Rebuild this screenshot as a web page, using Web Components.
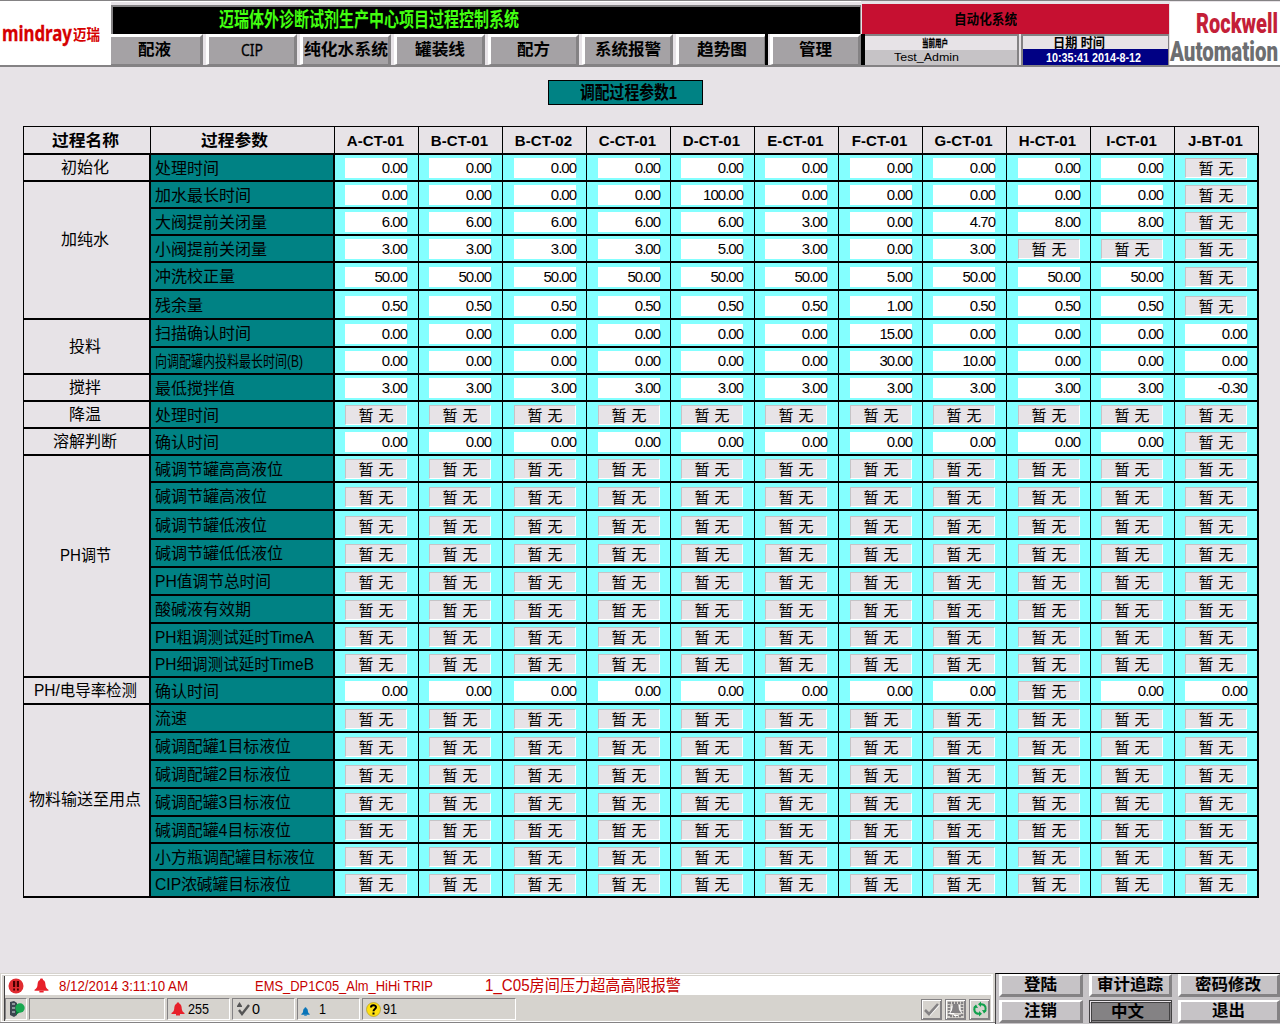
<!DOCTYPE html>
<html lang="zh-CN">
<head>
<meta charset="UTF-8">
<title>调配过程参数1</title>
<style>
    * { box-sizing: border-box; }
    html, body { margin: 0; padding: 0; }
    body {
        width: 1280px;
        height: 1024px;
        overflow: hidden;
        background: #e7e3e7;
        color: #000;
        font-family: "Liberation Sans", "Noto Sans CJK SC", sans-serif;
        font-size: 16px;
    }
    hmi-screen { height: 1024px; }
</style>
</head>
<body>
<hmi-screen>
    <hmi-header slot="header"></hmi-header>
    <page-title slot="title"><fit-text w="97" size="18" bold>调配过程参数1</fit-text></page-title>
    <param-table slot="main"></param-table>
    <alarm-bar slot="footer"></alarm-bar>
    <user-keys slot="footer"></user-keys>
</hmi-screen>

<script>
    // Text squeezed or stretched horizontally to a given width
    class FitText extends HTMLElement {
        connectedCallback() {
            const w = this.getAttribute('w');
            const size = this.getAttribute('size') || 16;
            this.attachShadow({ mode: 'open' });
            this.shadowRoot.innerHTML = `
                <style>
                    :host {
                        display: block;
                        flex: none;
                        width: ${w}px;
                        height: ${size}px;
                        line-height: ${size}px;
                        font-size: ${size}px;
                        white-space: nowrap;
                        ${this.hasAttribute('bold') ? 'font-weight: bold;' : ''}
                    }
                    span { display: inline-block; transform-origin: 0 50%; }
                </style>
                <span><slot></slot></span>
            `;
            const span = this.shadowRoot.querySelector('span');
            const real = span.getBoundingClientRect().width;
            if (real > 0) {
                span.style.transform = `scaleX(${w / real})`;
            }
        }
    }

    class HmiScreen extends HTMLElement {
        connectedCallback() {
            this.attachShadow({ mode: 'open' });
            this.shadowRoot.innerHTML = `
                <style>
                    :host { display: flex; flex-direction: column; width: 1280px; }
                    .title { display: flex; justify-content: center; padding: 13px 29px 21px 0; }
                    .main { padding-left: 23px; flex: 1; }
                    .footer { display: flex; height: 51px; }
                </style>
                <slot name="header"></slot>
                <div class="title"><slot name="title"></slot></div>
                <div class="main"><slot name="main"></slot></div>
                <div class="footer"><slot name="footer"></slot></div>
            `;
        }
    }

    class PageTitle extends HTMLElement {
        connectedCallback() {
            this.attachShadow({ mode: 'open' });
            this.shadowRoot.innerHTML = `
                <style>
                    :host {
                        display: flex;
                        box-sizing: border-box;
                        width: 155px;
                        height: 25px;
                        padding: 3px 0 0 31px;
                        border: 1px solid #000;
                        background: #008284;
                    }
                </style>
                <slot></slot>
            `;
        }
    }

    class NavButton extends HTMLElement {
        connectedCallback() {
            this.attachShadow({ mode: 'open' });
            this.shadowRoot.innerHTML = `
                <style>
                    :host {
                        display: flex;
                        box-sizing: border-box;
                        justify-content: center;
                        width: 91px;
                        height: 31px;
                        padding-top: 5px;
                        border-style: solid;
                        border-width: 3px 3px 1px 3px;
                        border-color: #fff #848284 #848284 #fff;
                        background: #a5a2a5;
                    }
                    :host([first]) { width: 92px; border-left-width: 0; padding-right: 2px; }
                </style>
                <slot></slot>
            `;
        }
    }

    class HmiHeader extends HTMLElement {
        connectedCallback() {
            this.attachShadow({ mode: 'open' });
            const items = [['配液', 33], ['CIP', 22], ['纯化水系统', 84], ['罐装线', 50],
                ['配方', 33], ['系统报警', 66], ['趋势图', 50], ['管理', 33]];
            this.shadowRoot.innerHTML = `
                <style>
                    * { box-sizing: border-box; }
                    :host {
                        display: flex;
                        box-sizing: border-box;
                        height: 67px;
                        border-top: 1px solid #848284;
                        border-bottom: 2px solid #848284;
                    }
                    .mindray { display: flex; width: 111px; padding: 22px 0 0 2px; background: #fff; color: #d60000; }
                    .mindray .cn { padding: 4px 0 0 1px; }
                    .mindray .en { font-family: "Noto Sans", sans-serif; -webkit-text-stroke: .3px #d60000; }
                    .mid { width: 750px; padding-top: 3px; border-top: 1px solid #fff; }
                    .banner {
                        height: 29px;
                        padding: 3px 0 0 106px;
                        border-style: solid;
                        border-width: 2px 1px 0 2px;
                        border-color: #848284;
                        background: #000;
                        color: #42ff10;
                    }
                    nav { display: flex; gap: 3px; }
                    nav .bar { width: 3px; margin: 0 -1px 0 -5px; background: #000; }
                    nav .latin { font-family: "Noto Sans", sans-serif; -webkit-text-stroke: .3px #000; }
                    .right { width: 309px; padding-top: 3px; }
                    .auto { height: 30px; margin: 0 1px 0 1px; padding: 8px 0 0 92px; background: #c61031; }
                    .info { display: flex; height: 31px; border-left: 4px solid #000; }
                    .user { width: 154px; border-top: 2px solid #848284; border-right: 2px solid #848284; }
                    .user .cap { height: 14px; padding: 3px 0 0 57px; -webkit-text-stroke: .3px #000; }
                    .user .val { height: 15px; padding: 2px 0 0 29px; background: #c6c3c6; }
                    .gap { width: 2px; }
                    .date { width: 148px; border-top: 2px solid #848284; border-left: 2px solid #848284; border-right: 1px solid #848284; }
                    .date .cap { height: 13px; padding: 0 0 0 30px; }
                    .date .val { height: 16px; padding: 3px 0 0 23px; background: #000084; color: #fff; }
                    .rockwell { width: 110px; border-top: 1px solid #e7e3e7; padding: 8px 0 0 0; background: #fff; font-family: Roboto, "Open Sans", sans-serif; }
                    .rockwell fit-text { font-weight: 900; }
                    .rockwell .r { padding-left: 26px; color: #c41f38; }
                    .rockwell .a { color: #6d6e71; }
                </style>
                <div class="mindray">
                    <fit-text class="en" w="70" size="21" bold>mindray</fit-text>
                    <div class="cn"><fit-text w="27" size="15" bold>迈瑞</fit-text></div>
                </div>
                <div class="mid">
                    <div class="banner"><fit-text w="300" size="20" bold>迈瑞体外诊断试剂生产中心项目过程控制系统</fit-text></div>
                    <nav>
                        ${items.map(([t, w], i) => `
                            ${i === 7 ? '<div class="bar"></div>' : ''}
                            <nav-button ${i === 0 ? 'first' : ''}><fit-text w="${w}" size="16" ${t === 'CIP' ? 'class="latin"' : 'bold'}>${t}</fit-text></nav-button>
                        `).join('')}
                    </nav>
                </div>
                <div class="right">
                    <div class="auto"><fit-text w="63" size="14" bold>自动化系统</fit-text></div>
                    <div class="info">
                        <div class="user">
                            <div class="cap"><fit-text w="26" size="10" bold>当前用户</fit-text></div>
                            <div class="val"><fit-text w="65" size="11">Test_Admin</fit-text></div>
                        </div>
                        <div class="gap"></div>
                        <div class="date">
                            <div class="cap"><fit-text w="52" size="13" bold>日期 时间</fit-text></div>
                            <div class="val"><fit-text w="95" size="12" bold>10:35:41 2014-8-12</fit-text></div>
                        </div>
                    </div>
                </div>
                <div class="rockwell">
                    <div class="r"><fit-text w="82" size="28">Rockwell</fit-text></div>
                    <div class="a"><fit-text w="108" size="28">Automation</fit-text></div>
                </div>
            `;
        }
    }

    // One value field: a number, or a greyed "not available" plate
    class ParamCell extends HTMLElement {
        connectedCallback() {
            this.attachShadow({ mode: 'open' });
            this.shadowRoot.innerHTML = `
                <style>
                    :host {
                        display: block;
                        box-sizing: border-box;
                        background: #84ffff;
                        border-right: 1px solid #000;
                        border-bottom: 2px solid #000;
                        overflow: hidden;
                    }
                    :host(.last) { border-right-width: 2px; }
                    div {
                        box-sizing: border-box;
                        width: 62px;
                        height: 20px;
                        line-height: 20px;
                        background: #fff;
                        text-align: right;
                        font-size: 15px;
                        letter-spacing: -1px;
                        white-space: nowrap;
                    }
                    :host([none]) div {
                        line-height: 19px;
                        border: 1px solid #fff;
                        border-top-color: #c6c3c6;
                        border-left-color: #c6c3c6;
                        background: #e7e3e7;
                        text-align: center;
                        letter-spacing: 0;
                        word-spacing: 1px;
                    }
                </style>
                <div><slot></slot></div>
            `;
        }
    }

    const TANKS = ['A-CT-01', 'B-CT-01', 'B-CT-02', 'C-CT-01', 'D-CT-01', 'E-CT-01',
        'F-CT-01', 'G-CT-01', 'H-CT-01', 'I-CT-01', 'J-BT-01'];
    // left offset of the field in each tank column
    const FIELD_X = [10, 10, 11, 11, 10, 10, 11, 10, 11, 10, 10];

    // group name, rows in group, text width, space kept free below the text
    const GROUPS = [['初始化', 1, 48, 0], ['加纯水', 5, 48, 20], ['投料', 2, 32, 0], ['搅拌', 1, 32, 0],
        ['降温', 1, 32, 0], ['溶解判断', 1, 64, 0], ['PH调节', 8, 51, 20], ['PH/电导率检测', 1, 103, 0], ['物料输送至用点', 7, 112, 2]];

    const Z = '0.00';
    const same = (v, n) => Array(n).fill(v);
    // label, row height, field top offset, values ('-' = not available), text width
    const ROWS = [
        ['处理时间', 27, 3, [...same(Z, 10), '-']],
        ['加水最长时间', 27, 3, [Z, Z, Z, Z, '100.00', Z, Z, Z, Z, Z, '-']],
        ['大阀提前关闭量', 27, 3, ['6.00', '6.00', '6.00', '6.00', '6.00', '3.00', Z, '4.70', '8.00', '8.00', '-']],
        ['小阀提前关闭量', 27, 3, ['3.00', '3.00', '3.00', '3.00', '5.00', '3.00', Z, '3.00', '-', '-', '-']],
        ['冲洗校正量', 28, 4, [...same('50.00', 6), '5.00', ...same('50.00', 3), '-']],
        ['残余量', 29, 5, [...same('0.50', 6), '1.00', ...same('0.50', 3), '-']],
        ['扫描确认时间', 28, 4, [...same(Z, 6), '15.00', ...same(Z, 4)]],
        ['向调配罐内投料最长时间(B)', 27, 3, [...same(Z, 6), '30.00', '10.00', ...same(Z, 3)], 148],
        ['最低搅拌值', 27, 3, [...same('3.00', 10), '-0.30']],
        ['处理时间', 27, 3, same('-', 11)],
        ['确认时间', 27, 3, [...same(Z, 10), '-']],
        ['碱调节罐高高液位', 27, 3, same('-', 11)],
        ['碱调节罐高液位', 28, 4, same('-', 11)],
        ['碱调节罐低液位', 29, 5, same('-', 11)],
        ['碱调节罐低低液位', 28, 4, same('-', 11)],
        ['PH值调节总时间', 28, 4, same('-', 11), 116],
        ['酸碱液有效期', 28, 4, same('-', 11)],
        ['PH粗调测试延时TimeA', 27, 3, same('-', 11), 159],
        ['PH细调测试延时TimeB', 27, 3, same('-', 11), 159],
        ['确认时间', 27, 3, [...same(Z, 8), '-', Z, Z]],
        ['流速', 28, 4, same('-', 11)],
        ['碱调配罐1目标液位', 28, 4, same('-', 11), 136],
        ['碱调配罐2目标液位', 28, 4, same('-', 11), 136],
        ['碱调配罐3目标液位', 28, 4, same('-', 11), 136],
        ['碱调配罐4目标液位', 27, 3, same('-', 11), 136],
        ['小方瓶调配罐目标液位', 27, 3, same('-', 11)],
        ['CIP浓碱罐目标液位', 27, 3, same('-', 11), 136],
    ];

    class ParamTable extends HTMLElement {
        connectedCallback() {
            this.attachShadow({ mode: 'open' });
            let html = '';
            html += `<div class="head name"><fit-text w="67" size="16" bold>过程名称</fit-text></div>`;
            html += `<div class="head param"><fit-text w="67" size="16" bold>过程参数</fit-text></div>`;
            TANKS.forEach(t => { html += `<div class="head tank">${t}</div>`; });

            let start = 2;
            GROUPS.forEach(([name, n, w, below]) => {
                html += `<div class="group" style="grid-area:${start} / 1 / span ${n}; padding-bottom:${below}px"><fit-text w="${w}">${name}</fit-text></div>`;
                start += n;
            });

            ROWS.forEach(([label, h, top, values, w], r) => {
                html += `<div class="label" style="grid-area:${r + 2} / 2"><fit-text w="${w || label.length * 16}">${label}</fit-text></div>`;
                values.forEach((v, c) => {
                    const none = v === '-';
                    html += `<param-cell class="${c === 10 ? 'last' : ''}" ${none ? 'none' : ''}
                        style="grid-area:${r + 2} / ${c + 3}; padding:${top}px 0 0 ${FIELD_X[c]}px">${none ? '暂 无' : v}</param-cell>`;
                });
            });

            this.shadowRoot.innerHTML = `
                <style>
                    * { box-sizing: border-box; }
                    :host {
                        display: grid;
                        width: 1236px;
                        border-top: 1px solid #000;
                        border-left: 1px solid #000;
                        box-sizing: border-box;
                        grid-template-columns: 127px 184px repeat(11, 84px);
                        grid-template-rows: 28px ${ROWS.map(r => r[1] + 'px').join(' ')};
                    }
                    .head, .group, .label {
                        display: flex;
                        align-items: center;
                        justify-content: center;
                        border-right: 2px solid #000;
                        border-bottom: 2px solid #000;
                    }
                    .head { border-right-width: 1px; padding-top: 2px; }
                    .name { padding-right: 4px; }
                    .param { padding-right: 16px; }
                    .tank { font-size: 15px; font-weight: bold; letter-spacing: .1px; padding: 0 2px 0 0; }
                    .group { padding-right: 3px; }
                    .label { justify-content: flex-start; padding: 2px 0 0 4px; background: #008284; }
                </style>
                ${html}
            `;
        }
    }

    const bell = (color, size) => `
        <svg width="${size}" height="${size}" viewBox="0 0 14 14">
            <path d="M7 0.5C8 .5 8.4 1 8.4 1.8C10.4 2.6 10.6 4.5 10.8 7C11 9 12 10 13.5 11V12H.5V11C2 10 3 9 3.2 7C3.4 4.500 3.600 2.600 5.600 1.800C5.600 1 6 .5 7 .5Z" fill="${color}"/>
            <path d="M5 12H9V13.500H5Z" fill="${color}"/>
        </svg>`;

    class AlarmBar extends HTMLElement {
        connectedCallback() {
            this.attachShadow({ mode: 'open' });
            this.shadowRoot.innerHTML = `
                <style>
                    * { box-sizing: border-box; }
                    :host {
                        display: flex;
                        flex-direction: column;
                        box-sizing: border-box;
                        width: 995px;
                        border-top: 1px solid #d6d3ce;
                        background: #d6d3ce;
                        padding: 0 2px 0 1px;
                        font-size: 14px;
                    }
                    svg { display: block; flex: none; }
                    .wrap { border: 1px solid #fff; border-right-width: 2px; padding: 1px 0 0 2px; height: 48px; }
                    .row { display: flex; align-items: center; height: 19px; background: #fff; color: #c60000; border-left: 1px solid #424142; padding: 0 0 0 3px; }
                    .row .bell { margin: 0 10px 0 10px; }
                    .t2 { margin-left: 67px; }
                    .t3 { margin-left: 52px; }
                    .status { display: flex; align-items: center; gap: 2px; height: 26px; padding: 2px 1px 0 0; border-left: 1px solid #424142; }
                    .box {
                        display: flex;
                        align-items: center;
                        height: 22px;
                        border: 1px solid #848284;
                        border-right-color: #fff;
                        border-bottom-color: #fff;
                        gap: 3px;
                        padding-left: 3px;
                    }
                    .tools { display: flex; gap: 3px; margin-left: auto; }
                    .tool {
                        display: flex;
                        align-items: center;
                        justify-content: center;
                        width: 21px;
                        height: 21px;
                        border: 1px solid #848284;
                        box-shadow: inset 1px 1px #fff, inset -1px -1px #848284;
                    }
                    .end { height: 2px; border-top: 1px solid #848284; background: #fff; margin: 0 -2px 0 -1px; }
                </style>
                <div class="wrap">
                    <div class="row">
                        <svg width="16" height="16" viewBox="0 0 16 16">
                            <circle cx="8" cy="8" r="7.500" fill="#e02b30"/>
                            <path d="M5 3H7.200V9H5ZM8.800 3H11V9H8.800ZM5.200 10.500H7V12.500H5.200ZM9 10.500H10.800V12.500H9Z" fill="#400"/>
                        </svg>
                        <div class="bell">${bell('#e7202a', 15)}</div>
                        <fit-text w="129" size="14">8/12/2014 3:11:10 AM</fit-text>
                        <fit-text class="t2" w="178" size="14">EMS_DP1C05_Alm_HiHi TRIP</fit-text>
                        <fit-text class="t3" w="196" size="16">1_C05房间压力超高高限报警</fit-text>
                    </div>
                    <div class="status">
                        <div class="box" style="width:22px">
                            <svg width="16" height="16" viewBox="0 0 16 16">
                                <path d="M1 1L5 0L8 2V14L5 16L1 14Z" fill="#3c4650"/>
                                <path d="M3 3H6M3 7H6M3 11H6" stroke="#8c969c" stroke-width="2"/>
                                <path d="M7 4L10 3L11 11L7 14Z" fill="#087838"/>
                                <circle cx="11" cy="7" r="4.700" fill="#18a850"/>
                            </svg>
                        </div>
                        <div class="box" style="width:136px"></div>
                        <div class="box" style="width:63px">${bell('#e7202a', 14)}<fit-text w="21" size="14">255</fit-text></div>
                        <div class="box" style="width:63px; gap:2px">
                            <svg width="14" height="15" viewBox="0 0 14 15">
                                <path d="M3.500 0L6 4H1Z M1 4H6V5H1Z" fill="#555"/>
                                <path d="M3 8L6 12L13 3" fill="none" stroke="#555" stroke-width="2.400"/>
                            </svg><fit-text w="8" size="14">0</fit-text>
                        </div>
                        <div class="box" style="width:63px; gap:9px"><div style="padding-top:4px">${bell('#0874b8', 9)}</div><fit-text w="7" size="14">1</fit-text></div>
                        <div class="box" style="width:154px; gap:2px">
                            <svg width="15" height="15" viewBox="0 0 15 15">
                                <circle cx="7.500" cy="7.500" r="7" fill="#ffe010" stroke="#a89020" stroke-width=".6"/>
                                <path d="M5 5.500C5 2.500 10 2.500 10 5.300C10 7 7.500 7 7.500 9.300M7.500 10.500V12.500" fill="none" stroke="#000" stroke-width="2"/>
                            </svg><fit-text w="14" size="14">91</fit-text>
                        </div>
                        <div class="tools">
                            <div class="tool"><svg width="17" height="17" viewBox="0 0 17 17">
                                <path d="M3 10L7 14L16 4" fill="none" stroke="#fff" stroke-width="1.500"/>
                                <path d="M2 9L6 13L15 3" fill="none" stroke="#848284" stroke-width="2.600"/>
                            </svg></div>
                            <div class="tool"><svg width="17" height="17" viewBox="0 0 17 17">
                                <path d="M2 2H15V15H2Z" fill="#d6d3ce" stroke="#848284" stroke-width="2.500" stroke-dasharray="2 1"/>
                                <path d="M6 3H11L12 9L14 12H3L5 9Z" fill="#848284"/>
                                <path d="M5 5L4.500 9L2.500 12.500H7V14.500H11M12.500 4L13 9L15 12" fill="none" stroke="#fff"/>
                            </svg></div>
                            <div class="tool"><svg width="16" height="16" viewBox="0 0 16 16">
                                <path d="M9 3.200C14 3.200 14.500 8 12.700 10.500M7 12.800C2 12.800 1.500 8 3.300 5.500" fill="none" stroke="#10a04c" stroke-width="2"/>
                                <path d="M9 .5V6L6 3.200ZM7 10V15.500L10 12.800Z" fill="#10a04c"/>
                                <path d="M10 9L15 9.500L12 12.500ZM6 7L1 6.500L4 3.500Z" fill="#10a04c"/>
                            </svg></div>
                        </div>
                    </div>
                </div>
                <div class="end"></div>
            `;
        }
    }

    class UserKeys extends HTMLElement {
        connectedCallback() {
            this.attachShadow({ mode: 'open' });
            const keys = [['登陆', 33], ['审计追踪', 66], ['密码修改', 66], ['注销', 33], ['中文', 33], ['退出', 33]];
            this.shadowRoot.innerHTML = `
                <style>
                    :host {
                        display: grid;
                        box-sizing: border-box;
                        width: 285px;
                        grid-template-columns: 84px 83px 102px;
                        grid-template-rows: 23px 23px;
                        column-gap: 6px;
                        row-gap: 3px;
                        padding-left: 3px;
                        border-top: 1px solid #000;
                        border-left: 1px solid #424142;
                        background: #c6c3c6;
                        overflow: hidden;
                    }
                    .key {
                        display: flex;
                        box-sizing: border-box;
                        align-items: center;
                        justify-content: center;
                        padding-right: 2px;
                        border-style: solid;
                        border-width: 2px 3px 3px 3px;
                        border-color: #fff #848284 #848284 #fff;
                        background: #c6c3c6;
                    }
                    .on {
                        padding-right: 6px;
                        background: #848284;
                        border: 1px solid #424142;
                        box-shadow: inset 1px 1px #e7e3e7, inset 2px 2px #424142, inset -1px -1px #848284, inset -2px -2px #424142;
                    }
                </style>
                ${keys.map(([t, w]) => `<div class="key ${t === '中文' ? 'on' : ''}"><fit-text w="${w}" size="16" bold>${t}</fit-text></div>`).join('')}
            `;
        }
    }

    customElements.define('fit-text', FitText);
    customElements.define('page-title', PageTitle);
    customElements.define('nav-button', NavButton);
    customElements.define('param-cell', ParamCell);
    customElements.define('hmi-screen', HmiScreen);
    customElements.define('hmi-header', HmiHeader);
    customElements.define('param-table', ParamTable);
    customElements.define('alarm-bar', AlarmBar);
    customElements.define('user-keys', UserKeys);
</script>
</body>
</html>
